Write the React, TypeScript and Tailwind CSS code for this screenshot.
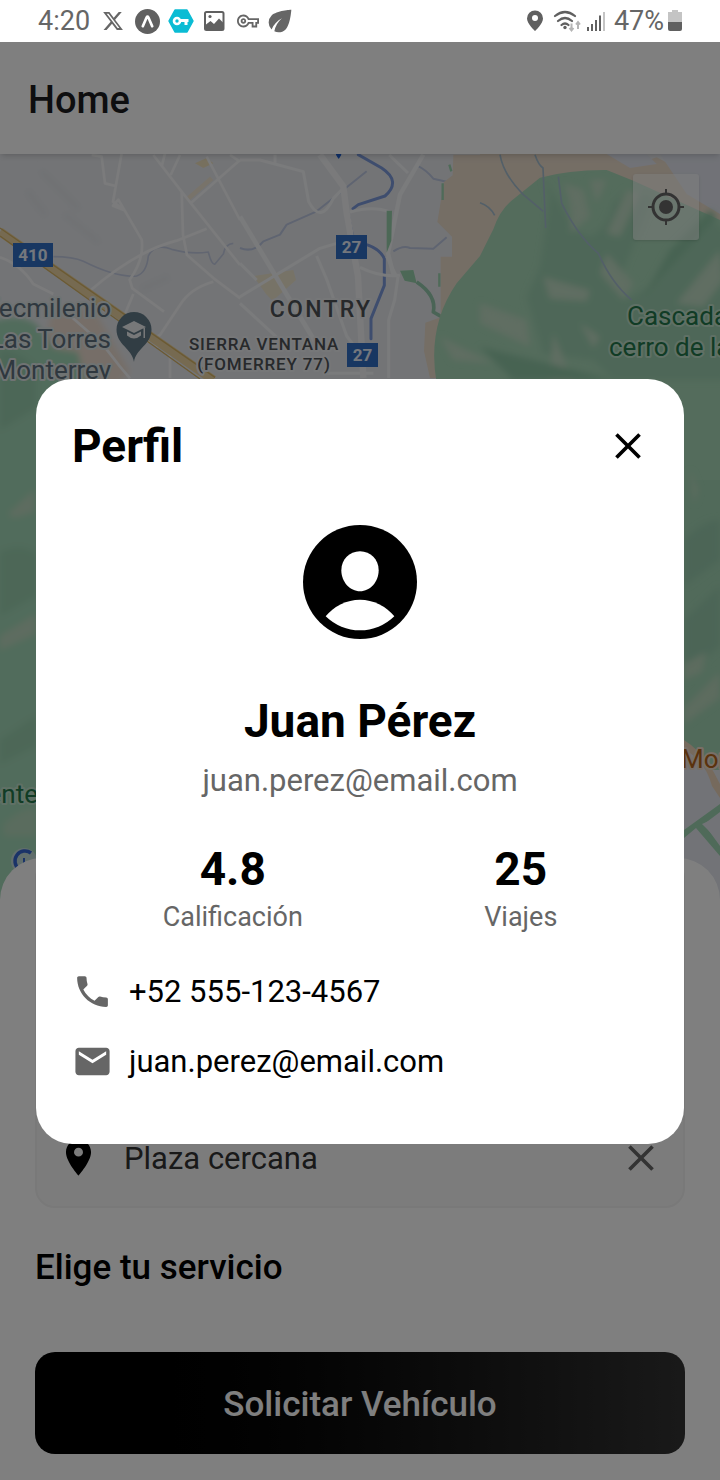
import type { ReactNode } from "react";
import { MdClose, MdEco, MdEmail, MdLocationOn, MdOutlineVpnKey, MdPhone } from "react-icons/md";
import { FaXTwitter } from "react-icons/fa6";

function StatusBar() {
  return (
    <div className="flex h-[42px] shrink-0 items-center justify-between bg-white px-[38px] text-[27px] leading-8 text-[#666]">
      <div className="flex items-center gap-3">
        <span>4:20</span>
        <FaXTwitter size={22} />
        <span className="-ml-px flex items-center gap-2">
          <svg width="25" height="25" viewBox="0 0 24 24" aria-hidden="true">
            <circle cx="12" cy="12" r="12" fill="#606060" />
            <path d="M7.500 16.500 11.200 8q.8-1.400 1.600 0L16.500 16.500" fill="none" stroke="#fff" strokeWidth="2.600" strokeLinecap="round" />
          </svg>
          <svg width="26" height="24" viewBox="0 0 26 24" aria-hidden="true">
            <path d="M7 1h12l6 11-6 11H7L1 12z" fill="#0bbcd4" stroke="#0bbcd4" strokeWidth="1.500" strokeLinejoin="round" />
            <circle cx="9" cy="12" r="3" fill="none" stroke="#fff" strokeWidth="2.600" />
            <path d="M12 11.500h8.500M18 12v4" fill="none" stroke="#fff" strokeWidth="3" />
          </svg>
          <svg width="24" height="24" viewBox="0 0 24 24" aria-hidden="true">
            <rect x="3" y="3" width="18.500" height="18" rx="1.500" fill="none" stroke="#606060" strokeWidth="2" />
            <path d="M4 15.500 8.500 12l3.500 3 5-5.500 4 4V20H4z" fill="#606060" />
            <circle cx="8" cy="7.500" r="1.600" fill="#606060" />
          </svg>
        </span>
        <MdOutlineVpnKey size={22} className="-ml-px" />
        <MdEco size={34} className="-ml-2" />
      </div>
      <div className="flex items-center gap-2">
        <svg width="18" height="24" viewBox="0 0 18 24" aria-hidden="true">
          <path d="M9 1.500a8 8 0 0 1 8 8C17 15 9 22 9 22S1 15 1 9.500a8 8 0 0 1 8-8z" fill="#606060" />
          <circle cx="9" cy="9" r="3" fill="#fff" />
        </svg>
        <svg width="30" height="24" viewBox="0 0 30 24" aria-hidden="true" fill="none">
          <g stroke="#606060" strokeWidth="2.200" strokeLinecap="round">
            <path d="M3 7q10-8 20 0M6 12q7-6 14 0M9.500 16q3.500-3 7 0" />
          </g>
          <circle cx="13" cy="18.500" r="1.700" fill="#606060" />
          <path d="M19.500 14.500V21m-2-2 2 2.500 2-2.500M26 20v-7m-2 2.500 2-2.500 2 2.500" stroke="#b5b5b5" strokeWidth="2" />
        </svg>
        <svg className="-ml-1" width="20" height="24" viewBox="0 0 20 24" aria-hidden="true">
          <path d="M1 18h2v4H1zM5 15h2v7H5zM9 11h2v11H9zM13 6.500h2V22h-2z" fill="#606060" />
          <path d="M17 3h2v19h-2z" fill="#c4c4c4" />
        </svg>
        <span>47%</span>
        <svg className="-ml-1" width="14" height="24" viewBox="0 0 14 24" aria-hidden="true">
          <path d="M4 1h6v2h4v10H0V3h4z" fill="#c4c4c4" />
          <path d="M0 13h14v7q0 2-2 2H2q-2 0-2-2z" fill="#606060" />
        </svg>
      </div>
    </div>
  );
}

function RoadShield({ x, y, w, children }: { x: number; y: number; w: number; children: string }) {
  return (
    <g>
      <rect x={x} y={y} width={w} height="24" fill="#306fc4" />
      <text x={x + w / 2} y={y + 18} textAnchor="middle" fill="#e8eefa" className="text-[17px] font-bold">
        {children}
      </text>
    </g>
  );
}

function CityMap() {
  return (
    <svg
      className="absolute inset-0 h-full w-full"
      viewBox="0 154 720 752"
      preserveAspectRatio="xMidYMin slice"
      role="img"
      aria-label="Mapa de Monterrey"
    >
      <defs>
        <filter id="relief" x="-10%" y="-10%" width="120%" height="120%">
          <feGaussianBlur stdDeviation="10" />
        </filter>
        <filter id="relief-fine" x="-40%" y="-10%" width="180%" height="120%">
          <feGaussianBlur stdDeviation="3" />
        </filter>
      </defs>
      <rect x="0" y="154" width="720" height="752" fill="#e7e9ed" />

      {/* western hills */}
      <g filter="url(#relief-fine)">
        <path d="M50 316 92 306 130 372 100 400H40z" fill="#ecddd0" />
        <path d="M-10 322q30-10 46 2l18 24 24 4 8 34V920H-10z" fill="#a3d8b8" />
        <path d="M0 350q20 0 36 18v40L0 430z" fill="#99ceae" />
        <path d="M8 514 34 490v22L14 518zM0 636l36-22v20L0 650z" fill="#bcd9c0" />
        <path d="M0 552q22-10 36 2v42L0 616zM0 740l36-24v30l-36 18z" fill="#9acfae" />
        <path d="M4 824q22-20 32-14v26H4z" fill="#b4d8bc" />
      </g>

      <g transform="translate(0 150) scale(.33333)" fill="none" strokeLinejoin="round">
        <path d="M120 60 240 180M80 120l60 80M190 190l110 90M420 420l90-40" stroke="#e1e4e8" strokeWidth="24" filter="url(#relief)" />
        <path d="m585 40 35-16 20 16-30 14z" fill="#efe1bd" />
        <path d="m560 150 75-65" stroke="#f0e6d4" strokeWidth="14" />
        <path d="M160 320q60 0 90 14 100 50 160 44 30-10 35-60 20-40 70-20 60 16 110 8 10 40 20 36l25-30q5-30 30-32" stroke="#c5cde2" strokeWidth="5" />
        <g stroke="#f6f7f8" strokeWidth="8">
          <path d="M275 15l30 5 10 80 32 8M365 10l-26 145 34 26-34-14 16-18 70 120q8 60-36 120l8 26 95 70M270 422q140-120 260-150l90-36" />
          <path d="M460 15l85 110 4 130 12 60 80 70 80 60M495 10l-10 40M540 15l-28 60M545 125l175 220M620 20l100 190M690 15l30 20M572 160l148-130" />
          <path d="M0 322q60 20 100 80l60 30M400 432l-25 60 100 100M640 395q-70 20-100 70l-60 90-60 30M290 560l70 90 30 35M510 600v84M180 470l90 80" />
        </g>
        <path d="M0 245 640 690" stroke="#ecd5a2" strokeWidth="27" />
        <path d="M0 234 645 682M0 258 600 687" stroke="#d7b466" strokeWidth="4" />
      </g>

      <g transform="translate(240 150) scale(.33333)" fill="none" strokeLinejoin="round">
        <path d="m40 378 120-18 8 30-70 62-20-20z" fill="#efe6ce" />
        <path d="M0 294q40 16 70-20l50-20 20-30 90-40 50-40 100-80M530 46q30 14 50 40 60 14 100 20l40 50M460 304q30-20 50-10l70 2 40-34" stroke="#bec9e2" strokeWidth="6" />
        <path d="M355 14l70 40q60 40 10 84l-80 26-16 12M325 196q10 60 20 80 70 10 88 50v80l-40 100v60" stroke="#7d9bdc" strokeWidth="9" strokeLinecap="round" />
        <g stroke="#f5f6f8" strokeWidth="9">
          <path d="M0 30h60l130 35 16 90q36 70 74-10l30-30M105 14v25M330 186q70-20 120 0M0 440l240-145 50-15M230 318l30 70 60 170 30 40M0 340l50 50M0 460l130 120M360 352q60 30 120 24M474 380l-10 70-18 60v174M448 15l56 54M250 670h150M440 320l30 60" />
          <path d="M0 200l240 400" strokeWidth="14" />
        </g>
        <path d="M240 14l70 95 10 80 34 190 16 305" stroke="#f4f5f7" strokeWidth="19" />
        <path d="M550 14l-70 120-36 176 18 70" stroke="#f5f6f8" strokeWidth="13" />
        <path d="M440 182h16l-2 90-14 36zM480 362l40-2 10 40-36-8z" fill="#98d1ac" />
        <path d="M530 396q60 40 50 90l24 14" stroke="#94c9ad" strokeWidth="11" />
        <path d="M290 14h12l-6 10z" fill="#1d5fd0" stroke="#1d5fd0" strokeWidth="4" />
        <path d="M640 14h90v670H570l-18-80 4-86 46-16V320h34v-60l-44-44 20-120 26-20z" fill="#eadccb" />
        <path d="M628 44l6 20M608 100v50M598 370v40" stroke="#9fd6b2" strokeWidth="7" />
      </g>

      {/* eastern hills */}
      <g transform="translate(480 150) scale(.33333)" fill="none">
        <path d="M0 12h400q60 40 130 10l190 100V400H0z" fill="#eadccb" />
        <path d="M380 12h120l30 30-80 12z" fill="#e2e5ee" />
        <path d="M540 12h180v180l-100-60z" fill="#e2e5ee" />
        <path d="M0 318q20-40 40-80 20-60 60-90l80-65q90-24 200-23l80 32 260 118V1860H650q-20-40-60-50L-130 700q-30-170 60-300z" fill="#a8d8b8" />
        <g filter="url(#relief)">
          <path d="M190 90q60 80 90 150l50 20q50-20 70-100l40-40 80 20-90 220 10 90 100-60 160-180 40 40v440H400l-60-60-150-20-50-170 40-90 30-210z" fill="#9ccfb0" />
          <path d="M250 100q30 60 20 150l60-50-20-80zM330 90l20 70 30-70zM440 120l-60 130 40 10 60-130zM720 300l-130 160 80 10 60-80zM380 310l80 90-30 50-70-80zM190 380q60 20 140 40l-10 34-110-8zM300 520l60 40-20 34zM220 550l60 150h-70zM-120 560l160 80-120-10zM0 460l140 50 10 80-150-70z" fill="#c0dcc4" />
          <path d="M570 300l-80 140 130-140 90-100-20-20zM0 590l200 50 200 50H100z" fill="#8fc6a5" />
        </g>
        <path d="M60 14q10 60 70 120l60 50M165 14q10 30 24 40l8 180M235 80l10 80q50 100 110 150 40 90 100 140M0 158q30 10 44 38" stroke="#a6bfd0" strokeWidth="5" />
      </g>
      <path d="M684 480h36v270h-36z" fill="#a2d4b4" />
      <g filter="url(#relief-fine)">
        <path d="M684 540q20-20 36-20v40l-36 26zM684 620l36-34v60l-36 30z" fill="#98cbad" />
        <path d="M690 470l8 20-4 14zM684 664l22-12-4 20-18 8zM684 708l36-36v26l-36 26z" fill="#bad8be" />
      </g>
      <path d="M684 748q20 12 28 36l8-8v130h-36z" fill="#e4e7ee" />
      <path d="M684 750q20 8 28 36l8 12v-14q-14-30-36-44z" fill="#ecd5bb" />
      <path d="M684 830 720 804v8l-16 12 16 22v10l-24-28-12 10z" fill="#9ed5b2" />
      <path d="M702 824l18-8v26zM696 832l20 22-8 6-16-22z" fill="#e4e7ee" />

      <RoadShield x={13} y={243} w={40}>410</RoadShield>
      <RoadShield x={336} y={235} w={31}>27</RoadShield>
      <RoadShield x={347} y={343} w={31}>27</RoadShield>

      <path d="M134 312a17.500 17.500 0 0 1 17.500 17.500C151.500 345 136 348 134 362c-2-14-17.500-17-17.500-32.500A17.500 17.500 0 0 1 134 312z" fill="#637b88" />
      <path d="m122 327 12-6 12 6-12 6zM127 331.500l7 3.500 7-3.500v4q-7 6-14 0zM143.500 328h1.500v10h-1.500z" fill="#eef1f3" />

      <g className="[paint-order:stroke]" strokeWidth="4" strokeLinejoin="round">
        <g className="text-[26px]" fill="#5f717f" stroke="#dfe6e6" textAnchor="end">
          <text x="111" y="317">Tecmilenio</text>
          <text x="111" y="348">Las Torres</text>
          <text x="111" y="379">Monterrey</text>
        </g>
        <g fill="#4e5257" stroke="#eceef1" textAnchor="middle" className="font-medium">
          <text x="321" y="317" className="text-[23px] tracking-widest">CONTRY</text>
          <text x="264" y="350" className="text-[17px] tracking-wider">SIERRA VENTANA</text>
          <text x="264" y="370" className="text-[17px] tracking-wider">(FOMERREY 77)</text>
        </g>
        <g className="text-[26px]" fill="#23784a" stroke="#bfe0ca">
          <text x="627" y="325">Cascada</text>
          <text x="609" y="356">cerro de la</text>
          <text x="38" y="803" textAnchor="end">Puente</text>
        </g>
        <text x="681" y="768" className="text-[26px]" fill="#b5651a" stroke="#f0dfce">Monte</text>
      </g>

      <circle cx="24" cy="861" r="13" fill="#c3dcd8" />
      <path d="M31 853a10 10 0 1 0 2 14" fill="none" stroke="#3566d0" strokeWidth="3.500" />
      <path d="M24 858v8" stroke="#3566d0" strokeWidth="2" />
    </svg>
  );
}

function LocateButton() {
  return (
    <button
      type="button"
      aria-label="Mi ubicación"
      className="absolute top-5 right-[21px] flex size-[66px] items-center justify-center rounded-[3px] bg-white/50 shadow"
    >
      <svg width="38" height="38" viewBox="0 0 38 38" fill="none" stroke="#666" aria-hidden="true">
        <circle cx="19" cy="19" r="13" strokeWidth="3" />
        <circle cx="19" cy="19" r="7" fill="#666" stroke="none" />
        <path d="M19 1v6M19 31v6M1 19h6M31 19h6" strokeWidth="2" />
      </svg>
    </button>
  );
}

function BookingSheet() {
  return (
    <section className="relative -mt-12 rounded-t-[42px] bg-white px-[35px] pb-[26px]">
      <div className="flex min-h-[350px] items-end rounded-[20px] border-2 border-[#f2f2f2] bg-[#f9f9f9] px-5 pb-[26px]">
        <label className="flex min-w-0 flex-1 items-center gap-6">
          <MdLocationOn size={43} className="shrink-0 text-black" />
          <input
            aria-label="Destino"
            defaultValue="Plaza cercana"
            className="min-w-0 flex-1 bg-transparent pt-1 text-[31px] leading-[42px] text-[#333] outline-none"
          />
        </label>
        <button type="button" aria-label="Borrar destino" className="text-[#666]">
          <MdClose size={44} />
        </button>
      </div>
      <h2 className="mt-[38px] text-[35px] leading-[44px] font-medium text-black">Elige tu servicio</h2>
      <button
        type="button"
        className="mt-[62px] flex h-[102px] w-full items-center justify-center rounded-[20px] bg-linear-to-r from-black to-[#333] pt-1 text-[35px] font-medium text-white"
      >
        Solicitar Vehículo
      </button>
    </section>
  );
}

function Stat({ value, label }: { value: string; label: string }) {
  return (
    <div className="flex flex-col items-center">
      <span className="text-[46px] leading-[60px] font-bold text-black">{value}</span>
      <span className="text-[27px] leading-9 text-[#666]">{label}</span>
    </div>
  );
}

function ContactRow({ icon, children }: { icon: ReactNode; children: ReactNode }) {
  return (
    <li className="flex items-center gap-4 text-[31px] leading-[42px] text-black">
      <span className="text-[#666]">{icon}</span>
      {children}
    </li>
  );
}

function ProfileDialog() {
  return (
    <div
      role="dialog"
      aria-modal="true"
      aria-labelledby="profile-title"
      className="w-full rounded-[36px] bg-white px-9 pt-9 pb-[61px]"
    >
      <div className="flex items-center justify-between">
        <h2 id="profile-title" className="text-[46px] leading-[62px] font-bold text-black">
          Perfil
        </h2>
        <button type="button" aria-label="Cerrar" className="-mr-0.5 text-black">
          <MdClose size={44} />
        </button>
      </div>
      <div className="mt-12 flex flex-col items-center">
        <svg width="114" height="114" viewBox="69 44 342 342" aria-hidden="true">
          <circle cx="240" cy="215" r="171" fill="#000" />
          <path d="M240 123c32 0 56 25 56 57 0 35-26 63-56 63s-56-28-56-63c0-32 24-57 56-57z" fill="#fff" />
          <path d="M137 318a132 132 0 0 1 206 0 147 147 0 0 1-206 0z" fill="#fff" />
        </svg>
        <p className="mt-[52px] text-[46px] leading-[60px] font-bold text-black">Juan Pérez</p>
        <p className="mt-[10px] text-[31px] leading-10 text-[#666]">juan.perez@email.com</p>
      </div>
      <div className="mt-[38px] flex justify-around">
        <Stat value="4.8" label="Calificación" />
        <Stat value="25" label="Viajes" />
      </div>
      <ul className="mt-9 flex flex-col gap-7">
        <ContactRow icon={<MdPhone size={41} />}>+52 555-123-4567</ContactRow>
        <ContactRow icon={<MdEmail size={41} />}>juan.perez@email.com</ContactRow>
      </ul>
    </div>
  );
}

export default function App() {
  return (
    <div className="flex min-h-screen flex-col bg-white font-[Roboto,sans-serif]">
      <StatusBar />
      <div className="relative flex flex-1 flex-col overflow-hidden">
        <header className="relative z-10 flex h-28 shrink-0 items-center bg-white px-7 pt-1 shadow-md">
          <h1 className="text-[38px] leading-[48px] font-medium text-[#1c1c1e]">Home</h1>
        </header>
        <main className="flex flex-1 flex-col">
          <div className="relative min-h-[400px] flex-1 overflow-hidden">
            <CityMap />
            <LocateButton />
          </div>
          <BookingSheet />
        </main>
        <div className="absolute inset-0 z-20 flex items-center justify-center bg-black/50 px-9">
          <ProfileDialog />
        </div>
      </div>
    </div>
  );
}
